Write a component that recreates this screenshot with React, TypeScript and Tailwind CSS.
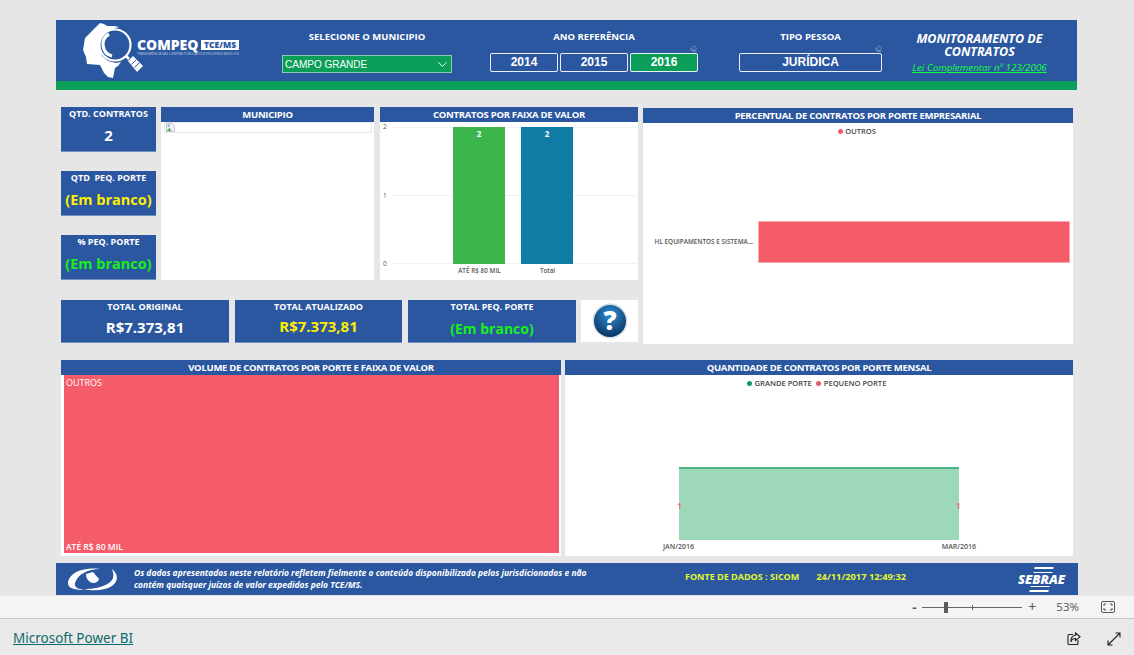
import React from 'react';
import { ChevronDown, Eraser } from 'lucide-react';

const font = { fontFamily: '"Open Sans", "Noto Sans", sans-serif' };
const arial = { fontFamily: '"Liberation Sans", sans-serif' };

function Title({ children, className = '' }: { children: React.ReactNode; className?: string }) {
  return (
    <div className={`h-[15px] bg-[#2a579f] text-white text-[9.5px] font-bold leading-[15px] tracking-[-0.28px] text-center whitespace-nowrap shrink-0 ${className}`}>
      {children}
    </div>
  );
}

function Kpi({ label, value, color, big }: { label: string; value: string; color: string; big?: boolean }) {
  return (
    <div className="h-[45px] bg-[#2a579f] border-b border-[#6f8dbd] text-center">
      <div className="text-white text-[9px] font-bold leading-[12px] pt-[1px] whitespace-pre">{label}</div>
      <div className={`font-bold whitespace-nowrap ${big ? 'text-[15px] leading-[21px] mt-[5px]' : 'text-[14.5px] leading-[20px] mt-[6px]'} ${color}`}>{value}</div>
    </div>
  );
}

function Total({ label, value, color, w }: { label: string; value: string; color: string; w: string }) {
  return (
    <div className={`h-[43px] bg-[#2a579f] border-b border-[#6f8dbd] text-center ${w}`}>
      <div className="text-white text-[9px] font-bold leading-[12px] pt-[1px]">{label}</div>
      <div className={`font-bold leading-[20px] ${color}`}>{value}</div>
    </div>
  );
}

function YearButton({ year, active }: { year: string; active?: boolean }) {
  return (
    <div className={`w-[68px] h-[19px] rounded-[2px] border border-white/90 text-white text-[12px] font-bold leading-[17px] text-center ${active ? 'bg-[#0a9e58]' : 'bg-[#2a579f]'}`} style={arial}>
      {year}
    </div>
  );
}

function Logo() {
  return (
    <div className="flex items-start w-[162px] h-[61px] ml-[27px] shrink-0">
      <svg viewBox="0 0 60 56" className="w-[60px] h-[56px] mt-[3px] shrink-0">
        <path d="M17 0 L21 1 L24 3 L31 3 L36 4 L22 9 L17 16 L16 24 L19 33 L25 38 L33 40 L38 39 L35 43 L32 45 L31 50 L30 55 L25 54 L21 50 L17 42 L4 41 L3 34 L0 27 L2 15 L9 8 Z" fill="#fff" />
        <circle cx="32" cy="22" r="15.5" fill="#2a579f" stroke="#fff" strokeWidth="2.2" />
        <path d="M26 11 A12 12 0 0 0 29 33" fill="none" stroke="#fff" strokeWidth="3.2" />
        <path d="M43 33 L46 36" stroke="#fff" strokeWidth="2.5" />
        <path d="M45 38 L50 33 L60 43 L54 49 Z" fill="#fff" />
        <path d="M48.5 41.5 L53.5 36.5 M51.5 44.5 L56.5 39.5" stroke="#2a579f" strokeWidth="1" />
      </svg>
      <div className="-ml-[6px] mt-[19px]">
        <div className="flex items-center gap-[3px] h-[12px]">
          <span className="text-white text-[14px] font-extrabold leading-[12px]">COMPEQ</span>
          <span className="bg-white text-[#2a579f] text-[8.5px] font-extrabold leading-[10px] px-[2.5px]">TCE/MS</span>
        </div>
        <div className="text-white/70 text-[3.1px] leading-[4px] mt-[1px] whitespace-nowrap">TRANSPARÊNCIA NAS COMPRAS PÚBLICAS DOS PEQUENOS NEGÓCIOS</div>
      </div>
    </div>
  );
}

function Header() {
  return (
    <div className="w-[1021px] h-[70px] bg-[#2a579f] border-b-[9px] border-[#0a9e58] flex text-white">
      <Logo />
      <div className="w-[170px] ml-[37px] shrink-0 pt-[10px]">
        <div className="text-[9.5px] font-bold text-center leading-[13px]">SELECIONE O MUNICIPIO</div>
        <div className="mt-[12px] h-[18px] bg-[#0a9e58] border border-[#8fc9aa] flex items-center justify-between pl-[2px] pr-[1px]">
          <span className="text-[10px]" style={arial}>CAMPO GRANDE</span>
          <ChevronDown size={15} strokeWidth={1.5} />
        </div>
      </div>
      <div className="w-[208px] ml-[38px] shrink-0 pt-[10px] relative">
        <div className="text-[9.5px] font-bold text-center leading-[13px]">ANO REFERÊNCIA</div>
        <div className="mt-[10px] flex gap-[2px]">
          <YearButton year="2014" />
          <YearButton year="2015" />
          <YearButton year="2016" active />
        </div>
        <Eraser size={7} className="absolute right-[1px] top-[25px] text-white/60" />
      </div>
      <div className="w-[143px] ml-[41px] shrink-0 pt-[10px] relative">
        <div className="text-[9.5px] font-bold text-center leading-[13px]">TIPO PESSOA</div>
        <div className="mt-[10px] h-[19px] rounded-[2px] border border-white/90 text-[12px] font-bold leading-[17px] text-center" style={arial}>JURÍDICA</div>
        <Eraser size={7} className="absolute right-[0px] top-[25px] text-white/60" />
      </div>
      <div className="flex-1 pt-[12px] pl-[28px] pr-[28px] text-center italic">
        <div className="text-[12.5px] font-bold leading-[13px]">MONITORAMENTO DE CONTRATOS</div>
        <div className="text-[9.8px] text-[#16ff3c] underline leading-[13px] mt-[3px] -mx-[20px] whitespace-nowrap">Lei Complementar nº 123/2006</div>
      </div>
    </div>
  );
}

function MunicipioCard() {
  return (
    <div className="w-[213px] h-[173px] ml-[5px] flex flex-col bg-white">
      <Title>MUNICIPIO</Title>
      <div className="h-[11px] ml-[3px] mr-[2px] border border-[#e8e8e8] pl-[1px]">
        <svg viewBox="0 0 10 10" className="w-[9px] h-[9px]">
          <path d="M0.5 0.5 H6.5 L9.5 3.5 V9.5 H0.5 Z" fill="#eef2f8" stroke="#9aa6b8" strokeWidth="0.7" />
          <path d="M1 9 L4 5 L6 9 Z" fill="#5fae4a" />
          <circle cx="3" cy="3" r="1.2" fill="#7fa8dc" />
        </svg>
      </div>
    </div>
  );
}

function FaixaChart() {
  return (
    <div className="w-[258px] h-[173px] ml-[6px] flex flex-col bg-white">
      <Title>CONTRATOS POR FAIXA DE VALOR</Title>
      <div className="h-[5px]" />
      <div className="flex flex-1">
        <div className="w-[12px] h-[143px] -mt-[3px] flex flex-col justify-between text-[6.5px] leading-[6px] text-[#555] pl-[3px] shrink-0">
          <span>2</span>
          <span>1</span>
          <span>0</span>
        </div>
        <div className="flex-1 flex flex-col">
          <div className="h-[137px] w-[245px] relative">
            <div className="absolute left-0 right-0 top-0 h-px bg-[#f1f1f1]" />
            <div className="absolute left-0 right-0 top-[68px] h-px bg-[#f1f1f1]" />
            <div className="absolute left-0 right-0 bottom-0 h-px bg-[#f1f1f1]" />
            <div className="relative h-full flex justify-center gap-[16px] pr-[3px]">
              <div className="w-[52px] bg-[#3cb64c] text-white text-[8px] font-bold text-center leading-[14px]">2</div>
              <div className="w-[52px] bg-[#107ca6] text-white text-[8px] font-bold text-center leading-[14px]">2</div>
            </div>
          </div>
          <div className="flex justify-center gap-[16px] text-[6.2px] font-semibold text-[#555] mt-[3px] leading-[8px] pr-[3px]">
            <span className="w-[52px] text-center whitespace-nowrap tracking-[0.1px]">ATÉ R$ 80 MIL</span>
            <span className="w-[52px] text-center">Total</span>
          </div>
        </div>
      </div>
    </div>
  );
}

function PercentChart() {
  return (
    <div className="w-[430px] h-[236px] bg-white flex flex-col mt-[1px]">
      <Title>PERCENTUAL DE CONTRATOS POR PORTE EMPRESARIAL</Title>
      <div className="flex items-center justify-center gap-[2px] text-[7.5px] font-semibold text-[#444] leading-[10px] mt-[3px] -ml-[2px] h-[10px]">
        <span className="w-[5px] h-[5px] rounded-full bg-[#f55c6a]" />
        OUTROS
      </div>
      <div className="flex items-center mt-[85px]">
        <div className="w-[110px] mr-[5px] text-[6.4px] font-semibold text-[#555] text-right whitespace-nowrap">HL EQUIPAMENTOS E SISTEMA...</div>
        <div className="w-[312px] h-[42px] bg-[#f55c6a] border border-[#fba9b1]" />
      </div>
    </div>
  );
}

function HelpButton() {
  return (
    <div className="w-[57px] h-[42px] ml-[5px] bg-white flex items-center justify-center">
      <svg viewBox="0 0 36 36" className="w-[36px] h-[36px]">
        <defs>
          <radialGradient id="ball" cx="0.5" cy="0.3" r="0.8">
            <stop offset="0" stopColor="#2f8fd6" />
            <stop offset="1" stopColor="#03264f" />
          </radialGradient>
        </defs>
        <circle cx="18" cy="18" r="17.5" fill="#d5dde4" />
        <circle cx="18" cy="18" r="16" fill="url(#ball)" />
        <text x="18" y="27" textAnchor="middle" fontSize="26" fontWeight="800" fill="#fff" fontFamily="Open Sans, sans-serif">?</text>
      </svg>
    </div>
  );
}

function Treemap() {
  return (
    <div className="w-[500px] h-[196px] flex flex-col bg-white">
      <Title>VOLUME DE CONTRATOS POR PORTE E FAIXA DE VALOR</Title>
      <div className="ml-[3px] w-[495px] flex-1 bg-[#f55c6a] mb-[3px] flex flex-col justify-between text-white text-[9px] px-[2px] leading-[12px]">
        <span className="pt-[2px]">OUTROS</span>
        <span className="font-semibold text-[8.5px]">ATÉ R$ 80 MIL</span>
      </div>
    </div>
  );
}

function MonthlyChart() {
  return (
    <div className="w-[508px] h-[196px] ml-[4px] flex flex-col bg-white">
      <Title>QUANTIDADE DE CONTRATOS POR PORTE MENSAL</Title>
      <div className="flex items-center justify-center gap-[3px] text-[7.6px] font-semibold text-[#444] leading-[10px] mt-[3px] -ml-[5px] h-[10px]">
        <span className="w-[5px] h-[5px] rounded-full bg-[#0a9e58]" />
        GRANDE PORTE
        <span className="w-[5px] h-[5px] rounded-full bg-[#d9606c] ml-[1px]" />
        PEQUENO PORTE
      </div>
      <div className="relative ml-[114px] w-[280px] h-[73px] mt-[79px] bg-[#9dd8ba] border-t-2 border-[#4fb384]">
        <span className="absolute -left-[2px] top-[32px] text-[9px] font-semibold leading-[10px] text-[#f0606e]">1</span>
        <span className="absolute -right-[2px] top-[32px] text-[9px] font-semibold leading-[10px] text-[#f0606e]">1</span>
      </div>
      <div className="flex justify-between ml-[98px] w-[313px] text-[7px] font-semibold text-[#555] leading-[9px] mt-[2px]">
        <span>JAN/2016</span>
        <span>MAR/2016</span>
      </div>
    </div>
  );
}

function Footer() {
  return (
    <div className="w-[1022px] h-[32px] bg-[#2a579f] flex items-center text-white">
      <svg viewBox="0 0 54 26" className="w-[54px] h-[26px] ml-[10px] shrink-0">
        <path d="M2 16 C4 6 18 1 34 3 C22 3 12 8 9 17 C8 21 12 23 18 24 C8 24 1 22 2 16 Z" fill="#fff" />
        <path d="M46 3 C52 8 53 15 46 20 C38 25 26 25 18 23 C30 23 44 20 47 12 C48 9 47 6 46 3 Z" fill="#fff" />
        <path d="M20 8 L27 6 L33 13 C32 17 27 18 24 16 C21 14 20 11 20 8 Z" fill="#fff" />
      </svg>
      <div className="w-[470px] ml-[14px] text-[8.5px] font-bold italic leading-[12px] tracking-[-0.02px] shrink-0">
        Os dados apresentados neste relatório refletem fielmente o conteúdo disponibilizado pelos jurisdicionados e não contém quaisquer juízos de valor expedidos pelo TCE/MS.
      </div>
      <span className="ml-[81px] text-[9px] font-bold text-[#e3f72c] whitespace-nowrap shrink-0 -mt-[4px]">FONTE DE DADOS : SICOM</span>
      <span className="ml-[17px] text-[9.3px] font-bold text-[#e3f72c] whitespace-nowrap shrink-0 -mt-[4px]">24/11/2017 12:49:32</span>
      <div className="ml-auto mr-[12px] relative w-[49px] h-[25px] shrink-0">
        <div className="absolute inset-x-[15px] top-0 bottom-0 flex flex-col justify-between -skew-x-12">
          <span className="h-[2px] bg-white" />
          <span className="h-[2px] bg-white" />
          <span className="h-[2px] bg-white" />
          <span className="h-[2px] bg-white" />
          <span className="h-[2px] bg-white" />
          <span className="h-[2px] bg-white" />
        </div>
        <span className="absolute inset-x-0 top-[6px] text-center text-[13px] font-extrabold italic leading-[13px] bg-[#2a579f]">SEBRAE</span>
      </div>
    </div>
  );
}

function Toolbar() {
  return (
    <div className="h-[23px] bg-[#f4f4f4] border-b border-[#c9c9c9] flex items-center justify-end text-[#555] shrink-0">
      <span className="text-[13px] font-bold leading-none">-</span>
      <div className="relative w-[100px] h-px bg-[#666] ml-[6px]">
        <span className="absolute left-[22px] -top-[5px] w-[4px] h-[11px] bg-[#5c5c5c]" />
        <span className="absolute left-[50px] -top-[2px] w-px h-[5px] bg-[#666]" />
      </div>
      <span className="text-[14px] leading-none ml-[6px]">+</span>
      <span className="text-[11.5px] ml-[20px]">53%</span>
      <svg viewBox="0 0 14 12" className="w-[14px] h-[12px] ml-[22px] mr-[19px]" fill="none" stroke="#555">
        <rect x="0.5" y="0.5" width="13" height="11" rx="1.5" />
        <path d="M3 5 V3 H5 M9 3 H11 V5 M11 7 V9 H9 M5 9 H3 V7" />
      </svg>
    </div>
  );
}

function BottomBar() {
  return (
    <div className="flex-1 bg-[#e9e9e9] flex items-center pl-[13px] pr-[13px] pt-[3px]">
      <span className="text-[13.5px] text-[#0f6b6b] underline" style={{ fontFamily: '"Noto Sans", sans-serif' }}>Microsoft Power BI</span>
      <svg viewBox="0 0 14 14" className="w-[14px] h-[14px] ml-auto" fill="none" stroke="#222" strokeWidth="1.1">
        <path d="M6 2.5 H2 Q1 2.5 1 3.5 V11.5 Q1 12.5 2 12.5 H10 Q11 12.5 11 11.5 V8" />
        <path d="M8.5 1 L13 4.8 L8.5 8.5 V6.5 C6 6.5 4.5 7.5 3.8 10 C3.8 6.5 5.5 3.5 8.5 3.2 Z" />
      </svg>
      <svg viewBox="0 0 14 14" className="w-[14px] h-[14px] ml-[26px]" fill="none" strokeWidth="1.1">
        <path d="M8.5 1 H13 V5.5 M13 1 L7 7" stroke="#222" />
        <path d="M5.5 13 H1 V8.5 M1 13 L7 7" stroke="#222" />
      </svg>
    </div>
  );
}

export default function App() {
  return (
    <div className="w-[1134px] h-[655px] bg-[#e6e6e6] flex flex-col overflow-hidden" style={font}>
      <div className="h-[596px] pl-[56px] pt-[20px] shrink-0">
        <Header />

        <div className="flex ml-[5px] mt-[17px]">
          <div className="w-[577px] shrink-0">
            <div className="flex">
              <div className="w-[95px] h-[173px] flex flex-col justify-between shrink-0">
                <Kpi label="QTD. CONTRATOS" value="2" color="text-white" big />
                <Kpi label="QTD  PEQ. PORTE" value="(Em branco)" color="text-[#ffee00]" />
                <Kpi label="% PEQ. PORTE" value="(Em branco)" color="text-[#19f019]" />
              </div>
              <MunicipioCard />
              <FaixaChart />
            </div>
            <div className="flex mt-[20px]">
              <Total w="w-[168px]" label="TOTAL ORIGINAL" value="R$7.373,81" color="text-white text-[15px] mt-[4px]" />
              <Total w="w-[167px] ml-[6px]" label="TOTAL ATUALIZADO" value="R$7.373,81" color="text-[#ffee00] text-[15px] mt-[3px]" />
              <Total w="w-[168px] ml-[6px]" label="TOTAL PEQ. PORTE" value="(Em branco)" color="text-[#19f019] text-[14px] mt-[6px]" />
              <HelpButton />
            </div>
          </div>
          <div className="ml-[5px]">
            <PercentChart />
          </div>
        </div>

        <div className="flex ml-[5px] mt-[16px]">
          <Treemap />
          <MonthlyChart />
        </div>

        <div className="mt-[7px]">
          <Footer />
        </div>
      </div>
      <Toolbar />
      <BottomBar />
    </div>
  );
}
